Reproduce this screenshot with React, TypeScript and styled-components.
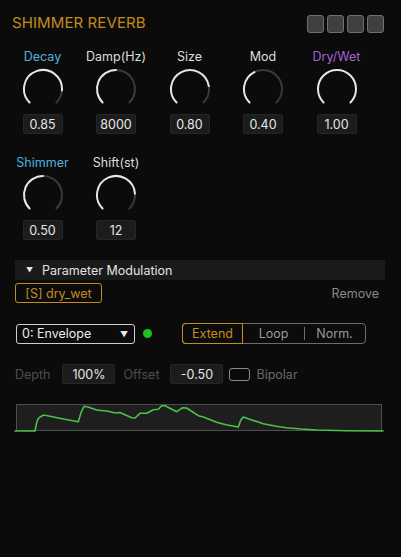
import React from "react";
import styled, { createGlobalStyle } from "styled-components";

const Global = createGlobalStyle`
  html, body { margin: 0; padding: 0; background: #0b0b0b; }
  body { font-family: Inter, "Noto Sans", sans-serif; color: #e0e0e0; }
  * { box-sizing: border-box; }
`;

const Page = styled.div`
  width: 401px;
  height: 557px;
  background: #0b0b0b;
  display: flex;
  flex-direction: column;
`;

const TitleRow = styled.div`
  display: flex;
  align-items: center;
  justify-content: space-between;
  padding: 15px 17px 0 12px;
  height: 34px;
`;

const Title = styled.div`
  font-size: 15px;
  color: #c48c1c;
  letter-spacing: 0.1px;
  margin-top: -4px;
`;

const Squares = styled.div`
  display: flex;
  gap: 3px;
  align-self: flex-start;
`;

const Square = styled.div`
  width: 17px;
  height: 18px;
  background: #404040;
  border: 1px solid #707070;
  border-radius: 3px;
`;

const KnobGrid = styled.div`
  display: grid;
  grid-template-columns: repeat(5, 61px);
  column-gap: 12.5px;
  row-gap: 21px;
  padding: 15px 0 0 12px;
`;

const KnobCell = styled.div`
  display: flex;
  flex-direction: column;
  align-items: center;
`;

const KnobLabel = styled.div<{ $color: string }>`
  font-size: 12.5px;
  line-height: 16px;
  color: ${(p) => p.$color};
  white-space: nowrap;
`;

const KnobSvg = styled.svg`
  display: block;
  margin-top: 3px;
`;

const ValueBox = styled.div<{ $w?: number }>`
  width: ${(p) => p.$w ?? 40}px;
  height: 20px;
  margin-top: 4px;
  background: #1c1c1c;
  border: 1px solid #262626;
  border-radius: 2px;
  display: flex;
  align-items: center;
  justify-content: center;
  font-size: 12.5px;
  color: #e6e6e6;
`;

const ModSection = styled.div`
  display: flex;
  flex-direction: column;
  padding: 20px 16px 0 15px;
`;

const SectionHeader = styled.div`
  height: 20px;
  background: #1a1a1a;
  display: flex;
  align-items: center;
  padding-left: 11px;
  gap: 9px;
  font-size: 12.5px;
  color: #e2e2e2;
`;

const Caret = styled.span`
  font-size: 7px;
  color: #e2e2e2;
`;

const TargetRow = styled.div`
  display: flex;
  align-items: center;
  justify-content: space-between;
  margin-top: 3px;
  padding-right: 6px;
`;

const TargetButton = styled.div`
  height: 20px;
  width: 87px;
  border: 1.5px solid #c48c1c;
  border-radius: 3px;
  color: #c48c1c;
  font-size: 12.5px;
  display: flex;
  align-items: center;
  justify-content: center;
`;

const RemoveText = styled.div`
  font-size: 12.5px;
  color: #8a8a8a;
`;

const SourceRow = styled.div`
  display: flex;
  align-items: center;
  margin-top: 20px;
`;

const Dropdown = styled.div`
  width: 119px;
  height: 20px;
  margin-left: 1px;
  border: 1px solid #cfcfcf;
  border-radius: 3px;
  display: flex;
  align-items: center;
  justify-content: space-between;
  padding: 0 6px 0 5px;
  font-size: 12.5px;
  color: #ececec;
`;

const DropArrow = styled.span`
  font-size: 8px;
  color: #e8e8e8;
`;

const Dot = styled.div`
  width: 9px;
  height: 9px;
  border-radius: 50%;
  background: #1ec21e;
  margin-left: 8px;
`;

const Segmented = styled.div`
  display: flex;
  margin-left: 30px;
  height: 21px;
  border: 1px solid #6c6c6c;
  border-radius: 4px;
`;

const Segment = styled.div<{ $active?: boolean; $sep?: boolean }>`
  position: relative;
  width: 61px;
  display: flex;
  align-items: center;
  justify-content: center;
  font-size: 12.5px;
  color: ${(p) => (p.$active ? "#c48c1c" : "#9a9a9a")};
  ${(p) =>
    p.$active
      ? `border: 1.5px solid #c48c1c; margin: -1px 0 -1px -1px; border-radius: 3px 0 0 3px;`
      : ""}
  ${(p) =>
    p.$sep
      ? `&::before { content: ""; position: absolute; left: 0; top: 3px; bottom: 3px; width: 1px; background: #6c6c6c; }`
      : ""}
`;

const ParamRow = styled.div`
  display: flex;
  align-items: center;
  margin-top: 20px;
`;

const DimLabel = styled.div<{ $ml?: number; $color?: string }>`
  font-size: 12.5px;
  color: ${(p) => p.$color ?? "#4e4e4e"};
  margin-left: ${(p) => p.$ml ?? 0}px;
`;

const ParamBox = styled.div<{ $ml: number }>`
  width: 53px;
  height: 20px;
  margin-left: ${(p) => p.$ml}px;
  background: #1c1c1c;
  border: 1px solid #262626;
  border-radius: 2px;
  display: flex;
  align-items: center;
  justify-content: center;
  font-size: 12.5px;
  color: #e6e6e6;
`;

const Checkbox = styled.div`
  width: 21px;
  height: 13px;
  margin-left: 6px;
  border: 1px solid #8a8a8a;
  border-radius: 3px;
`;

const EnvSvg = styled.svg`
  display: block;
  margin-top: 20px;
  margin-left: 1px;
  overflow: visible;
`;

function polar(cx: number, cy: number, r: number, deg: number) {
  const a = (deg * Math.PI) / 180;
  return [cx + r * Math.sin(a), cy - r * Math.cos(a)];
}

function arc(cx: number, cy: number, r: number, a0: number, a1: number) {
  const [x0, y0] = polar(cx, cy, r, a0);
  const [x1, y1] = polar(cx, cy, r, a1);
  const large = a1 - a0 > 180 ? 1 : 0;
  return `M ${x0.toFixed(2)} ${y0.toFixed(2)} A ${r} ${r} 0 ${large} 1 ${x1.toFixed(2)} ${y1.toFixed(2)}`;
}

const Knob: React.FC<{ value: number }> = ({ value }) => {
  const start = 225;
  const end = 225 + 270;
  const v = start + 270 * value;
  return (
    <KnobSvg width={42} height={42} viewBox="0 0 42 42">
      {value < 1 && (
        <path d={arc(21, 21, 19, v, end)} fill="none" stroke="#3a3a3a" strokeWidth={2} strokeLinecap="round" />
      )}
      {value > 0 && (
        <path d={arc(21, 21, 19, start, v)} fill="none" stroke="#e6e6e6" strokeWidth={2} strokeLinecap="round" />
      )}
    </KnobSvg>
  );
};

const knobs = [
  { label: "Decay", value: "0.85", pos: 0.85, color: "#4fb1de" },
  { label: "Damp(Hz)", value: "8000", pos: 0.5, color: "#dedede" },
  { label: "Size", value: "0.80", pos: 0.8, color: "#dedede" },
  { label: "Mod", value: "0.40", pos: 0.4, color: "#dedede" },
  { label: "Dry/Wet", value: "1.00", pos: 1, color: "#a862d8" },
  { label: "Shimmer", value: "0.50", pos: 0.5, color: "#4fb1de" },
  { label: "Shift(st)", value: "12", pos: 0.82, color: "#dedede" },
];

const envPoints: [number, number][] = [
  [-1, 27], [19, 27], [20.7, 18.7], [22, 15], [24, 13], [27.3, 11.3], [29, 11.2],
  [40, 13.5], [50, 15.5], [62.3, 17.7], [64, 12], [65.7, 7], [68, 2.3], [72, 3],
  [80.7, 6], [92.3, 7.2], [99, 9], [104, 8.5], [115.7, 13.7], [119, 14],
  [124, 9.3], [130.7, 9.3], [137.3, 5.7], [142.3, 5.3], [145.7, 1.7], [149, 1.7],
  [160.7, 7.7], [166.7, 3.7], [170.7, 4], [182.3, 11.7], [187.3, 13], [200.7, 18.3],
  [210, 20.8], [222.3, 23], [224.7, 16.3], [227.3, 13], [235, 15.7], [247.3, 19.7],
  [260, 22.3], [270.7, 23.7], [285, 25], [300.7, 26], [330, 26.8], [367, 27],
];

const Envelope: React.FC = () => (
  <EnvSvg width={366} height={27} viewBox="0 0 366 27">
    <rect x={0.5} y={0.5} width={365} height={26} fill="#1e1e1e" stroke="#4e4e4e" strokeWidth={1} />
    <polyline
      points={envPoints.map(([x, y]) => `${x},${y}`).join(" ")}
      fill="none"
      stroke="#4cc04c"
      strokeWidth={1.6}
      strokeLinejoin="round"
      strokeLinecap="round"
    />
  </EnvSvg>
);

export default function App() {
  return (
    <>
      <Global />
      <Page>
        <TitleRow>
          <Title>SHIMMER REVERB</Title>
          <Squares>
            <Square />
            <Square />
            <Square />
            <Square />
          </Squares>
        </TitleRow>
        <KnobGrid>
          {knobs.map((k) => (
            <KnobCell key={k.label}>
              <KnobLabel $color={k.color}>{k.label}</KnobLabel>
              <Knob value={k.pos} />
              <ValueBox>{k.value}</ValueBox>
            </KnobCell>
          ))}
        </KnobGrid>
        <ModSection>
          <SectionHeader>
            <Caret>▼</Caret>
            <span>Parameter Modulation</span>
          </SectionHeader>
          <TargetRow>
            <TargetButton>[S] dry_wet</TargetButton>
            <RemoveText>Remove</RemoveText>
          </TargetRow>
          <SourceRow>
            <Dropdown>
              <span>0: Envelope</span>
              <DropArrow>▼</DropArrow>
            </Dropdown>
            <Dot />
            <Segmented>
              <Segment $active>Extend</Segment>
              <Segment>Loop</Segment>
              <Segment $sep>Norm.</Segment>
            </Segmented>
          </SourceRow>
          <ParamRow>
            <DimLabel>Depth</DimLabel>
            <ParamBox $ml={12}>100%</ParamBox>
            <DimLabel $ml={8}>Offset</DimLabel>
            <ParamBox $ml={11}>-0.50</ParamBox>
            <Checkbox />
            <DimLabel $ml={6} $color="#686868">Bipolar</DimLabel>
          </ParamRow>
          <Envelope />
        </ModSection>
      </Page>
    </>
  );
}
